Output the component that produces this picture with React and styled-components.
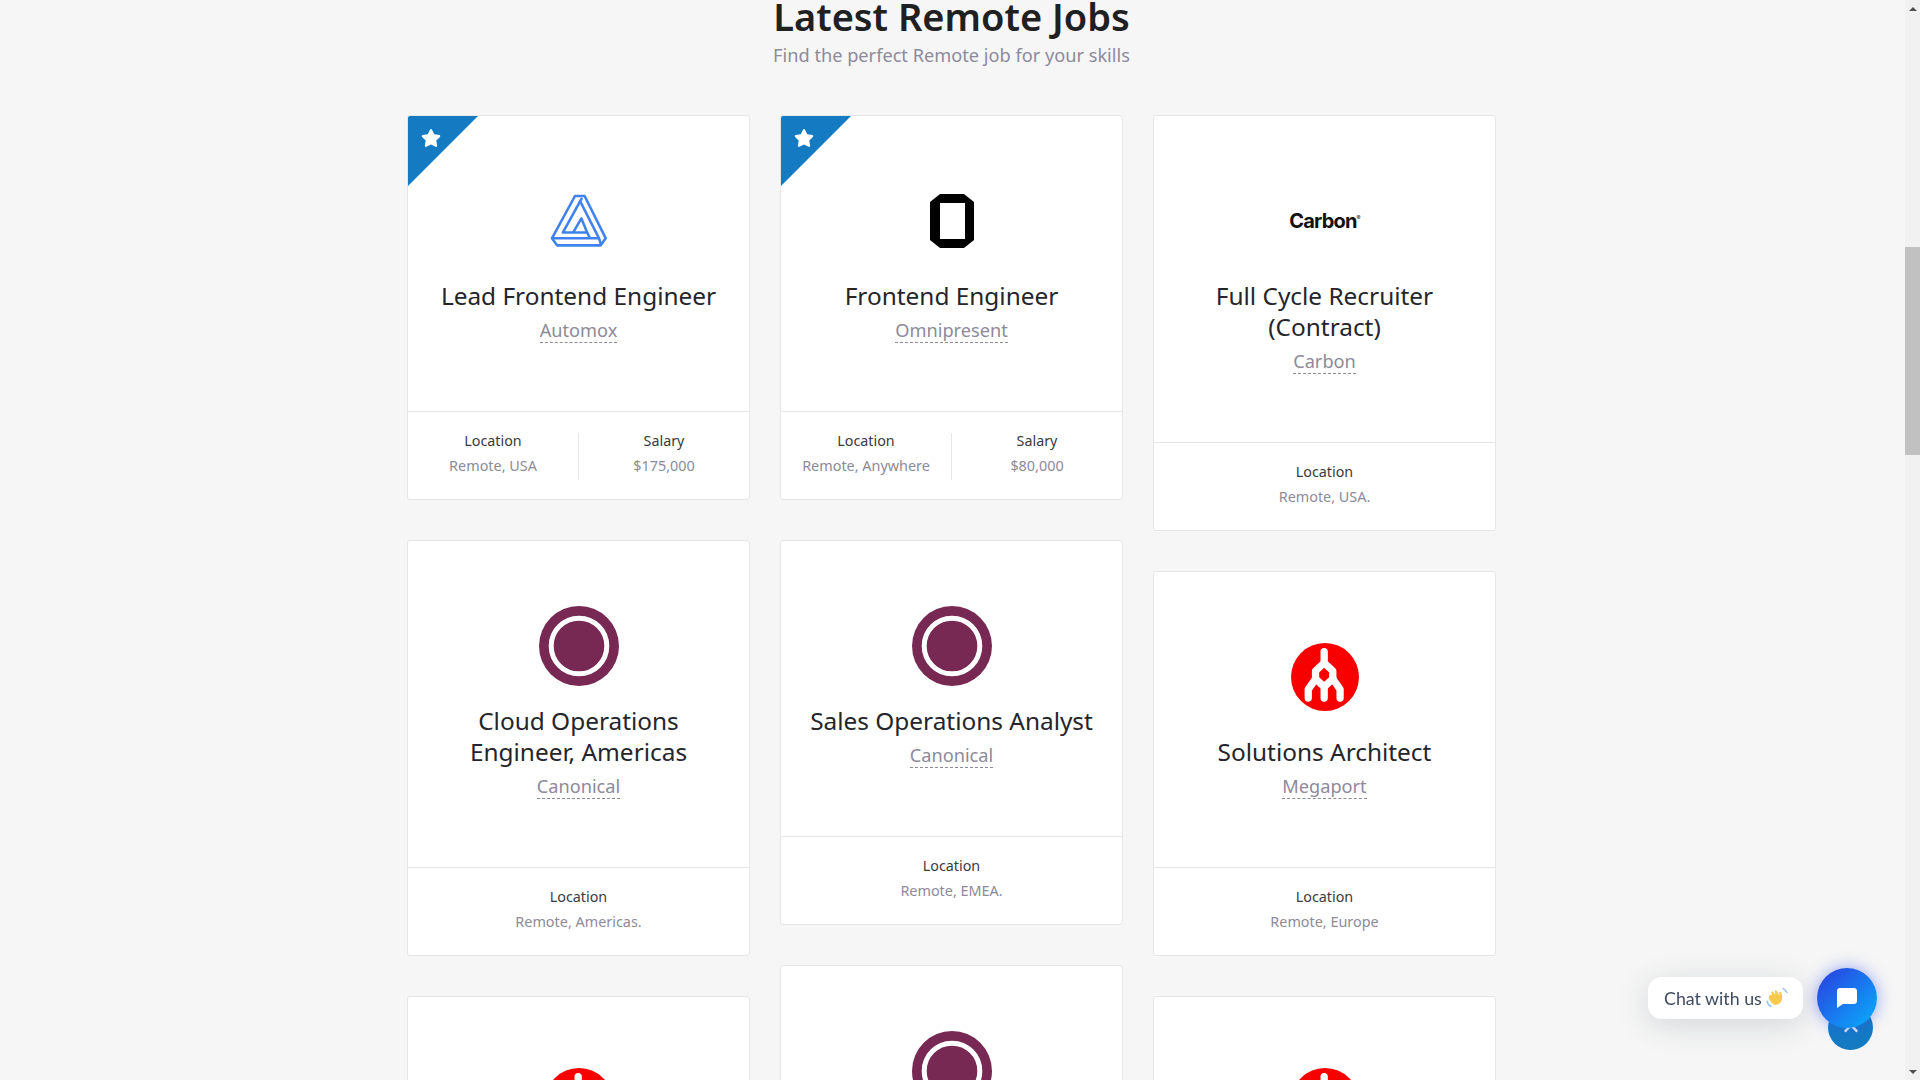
import React from "react";
import styled, { createGlobalStyle } from "styled-components";
import { FaStar, FaChevronUp } from "react-icons/fa";

const GlobalStyle = createGlobalStyle`
  html, body {
    margin: 0;
    height: 100%;
    overflow: hidden;
    background: #f6f6f6;
  }
  * {
    box-sizing: border-box;
  }
`;

function AutomoxLogo() {
  return (
    <svg width="58" height="54" viewBox="52 40 181 168" fill="none" stroke="#3f82f0" strokeWidth="8" strokeLinejoin="round">
      <path d="M130 46H160L226 178L210 200H74L58 178Z" />
      <path d="M58 178H205L212 200" />
      <path d="M205 178L145 60" />
      <path d="M152 52L92 160H168L150 116L124 160" />
      <path d="M168 160L177 178" />
    </svg>
  );
}

function OmnipresentLogo() {
  return (
    <svg width="44" height="54" viewBox="0 0 44 54">
      <path
        fillRule="evenodd"
        fill="#000"
        d="M10 0H34L44 8V46L34 54H10L0 46V8ZM10 9V45H35V9Z"
      />
    </svg>
  );
}

function CarbonLogo() {
  return (
    <CarbonMark>
      Carbon<sup>®</sup>
    </CarbonMark>
  );
}

function CanonicalLogo() {
  return (
    <svg width="80" height="80" viewBox="0 0 80 80">
      <circle cx="40" cy="40" r="40" fill="#772953" />
      <circle cx="40" cy="40" r="27.8" fill="none" stroke="#fff" strokeWidth="5" />
    </svg>
  );
}

function MegaportLogo() {
  return (
    <svg width="68" height="68" viewBox="60 68 205 205">
      <circle cx="162.5" cy="170.5" r="102.5" fill="#f80000" />
      <g fill="none" stroke="#fff" strokeWidth="22" strokeLinecap="round" strokeLinejoin="round">
        <path d="M160 94V128" />
        <path d="M160 128L134 152V176L160 200L186 176V152Z" />
        <path d="M134 176L112 208V234" />
        <path d="M186 176L208 208V234" />
        <path d="M160 200V234" />
      </g>
    </svg>
  );
}

function WaveEmoji() {
  return (
    <svg width="22" height="22" viewBox="0 0 20 20">
      <path d="M1 13c.4 2 1.6 3.6 3.4 4.7" fill="none" stroke="#8cc6ee" strokeWidth="1.4" strokeLinecap="round" />
      <path d="M15.5 1.5c1.5.6 2.8 1.8 3.5 3.5" fill="none" stroke="#8cc6ee" strokeWidth="1.4" strokeLinecap="round" />
      <path
        fill="#fbc94b"
        d="M3.6 7.5c.8-.7 1.7-.3 2.2.4l-.9-2.5c-.4-1 .9-1.8 1.7-.8l2 2.6-.6-3.1c-.2-1.1 1.3-1.5 1.8-.4l2.4 4.3-.2-2.7c-.1-1.2 1.5-1.4 1.9-.3.9 2.4 1.3 5.3.1 7.8-1.4 3-5 4.4-7.7 2.6-2.1-1.4-3.2-4-3.9-6.2-.2-.6.6-.9 1.2-1.7z"
      />
    </svg>
  );
}

function ChatBubble() {
  return (
    <svg width="20" height="20" viewBox="0 0 20 20">
      <path fill="#fff" d="M3 0H17C18.7 0 20 1.3 20 3V13C20 14.7 18.7 16 17 16H6L0 20V3C0 1.3 1.3 0 3 0Z" />
    </svg>
  );
}

const logos = {
  automox: AutomoxLogo,
  omnipresent: OmnipresentLogo,
  carbon: CarbonLogo,
  canonical: CanonicalLogo,
  megaport: MegaportLogo,
};

// the last card of each column runs past the fold, only its logo shows
const columns = [
  [
    { logo: "automox", title: "Lead Frontend Engineer", company: "Automox", location: "Remote, USA", salary: "$175,000", featured: true },
    { logo: "canonical", title: "Cloud Operations Engineer, Americas", company: "Canonical", location: "Remote, Americas." },
    { logo: "megaport" },
  ],
  [
    { logo: "omnipresent", title: "Frontend Engineer", company: "Omnipresent", location: "Remote, Anywhere", salary: "$80,000", featured: true },
    { logo: "canonical", title: "Sales Operations Analyst", company: "Canonical", location: "Remote, EMEA." },
    { logo: "canonical" },
  ],
  [
    { logo: "carbon", title: "Full Cycle Recruiter (Contract)", company: "Carbon", location: "Remote, USA." },
    { logo: "megaport", title: "Solutions Architect", company: "Megaport", location: "Remote, Europe" },
    { logo: "megaport" },
  ],
];

function JobCard({ job }) {
  const Logo = logos[job.logo];
  return (
    <Card>
      {job.featured && (
        <Ribbon>
          <FaStar />
        </Ribbon>
      )}
      <CardBody>
        <LogoSlot>
          <Logo />
        </LogoSlot>
        {job.title && <JobTitle>{job.title}</JobTitle>}
        {job.company && (
          <CompanyRow>
            <Company>{job.company}</Company>
          </CompanyRow>
        )}
      </CardBody>
      {job.location && (
        <CardFooter>
          <FooterCell>
            <FooterLabel>Location</FooterLabel>
            <FooterValue>{job.location}</FooterValue>
          </FooterCell>
          {job.salary && (
            <FooterCell $divided>
              <FooterLabel>Salary</FooterLabel>
              <FooterValue>{job.salary}</FooterValue>
            </FooterCell>
          )}
        </CardFooter>
      )}
    </Card>
  );
}

export default function App() {
  return (
    <Page>
      <GlobalStyle />
      <Main>
        <Heading>Latest Remote Jobs</Heading>
        <SubHeading>Find the perfect Remote job for your skills</SubHeading>
        <Columns>
          {columns.map((jobs, i) => (
            <Column key={i}>
              {jobs.map((job, j) => (
                <JobCard key={j} job={job} />
              ))}
            </Column>
          ))}
        </Columns>
      </Main>
      <Scrollbar>
        <ArrowButton>
          <ArrowUp />
        </ArrowButton>
        <Track>
          <Thumb />
        </Track>
        <ArrowButton>
          <ArrowDown />
        </ArrowButton>
      </Scrollbar>
      <BackToTop>
        <FaChevronUp />
      </BackToTop>
      <ChatWidget>
        <ChatPill>
          Chat with us <WaveEmoji />
        </ChatPill>
        <ChatButton>
          <ChatBubble />
        </ChatButton>
      </ChatWidget>
    </Page>
  );
}

const Page = styled.div`
  display: flex;
  height: 100vh;
  overflow: hidden;
  font-family: "Noto Sans", "Open Sans", sans-serif;
  background: #f6f6f6;
`;

const Main = styled.main`
  flex: 1;
  min-width: 0;
  padding-right: 2px;
  overflow: hidden;
`;

const Heading = styled.h2`
  margin: 0;
  text-align: center;
  font-size: 38px;
  line-height: 33px;
  font-weight: 600;
  color: #1e2022;
`;

const SubHeading = styled.p`
  margin: 9px 0 0;
  text-align: center;
  font-size: 18.2px;
  line-height: 27px;
  color: #8d8a9a;
`;

const Columns = styled.div`
  display: grid;
  grid-template-columns: repeat(3, 1fr);
  gap: 30px;
  width: 1089px;
  margin: 46px auto 0;
  align-items: start;
`;

const Column = styled.div`
  display: flex;
  flex-direction: column;
  gap: 40px;
`;

const Card = styled.article`
  position: relative;
  overflow: hidden;
  background: #fff;
  border: 1px solid #e6e6e6;
  border-radius: 3px;
`;

const Ribbon = styled.div`
  position: absolute;
  top: 0;
  left: 0;
  width: 70px;
  height: 70px;
  padding: 12px 0 0 13px;
  background: #147bc3;
  clip-path: polygon(0 0, 100% 0, 0 100%);
  color: #fff;
  font-size: 20px;
  line-height: 1;
`;

const CardBody = styled.div`
  padding: 65px 20px 66px;
  text-align: center;
`;

const LogoSlot = styled.div`
  display: flex;
  align-items: center;
  justify-content: center;
  height: 80px;
`;

const CarbonMark = styled.span`
  font-family: "Inter", "Liberation Sans", sans-serif;
  font-size: 20px;
  font-weight: 700;
  letter-spacing: -0.8px;
  color: #111;

  sup {
    font-size: 6px;
    font-weight: 400;
  }
`;

const JobTitle = styled.h3`
  margin: 19px 0 0;
  font-size: 24.4px;
  line-height: 31px;
  font-weight: 400;
  color: #25252b;
`;

const CompanyRow = styled.div`
  margin-top: 7px;
  height: 27px;
`;

const Company = styled.span`
  display: inline-block;
  font-size: 18.2px;
  line-height: 24px;
  color: #8d8a9a;
  border-bottom: 1px dashed #8d8a9a;
`;

const CardFooter = styled.div`
  display: flex;
  height: 88px;
  padding-top: 21px;
  border-top: 1px solid #e6e6e6;
`;

const FooterCell = styled.div`
  flex: 1;
  height: 47px;
  text-align: center;
  border-left: ${(p) => (p.$divided ? "1px solid #e6e6e6" : "none")};
`;

const FooterLabel = styled.div`
  font-size: 14.3px;
  line-height: 16px;
  color: #3a3a40;
`;

const FooterValue = styled.div`
  margin-top: 8px;
  font-size: 14.4px;
  line-height: 18px;
  color: #8d8a9a;
`;

const Scrollbar = styled.aside`
  display: flex;
  flex-direction: column;
  flex: 0 0 15px;
  background: #f1f1f1;
`;

const ArrowButton = styled.div`
  display: flex;
  align-items: center;
  justify-content: center;
  height: 17px;
  flex: none;
`;

const ArrowUp = styled.span`
  border: 4px solid transparent;
  border-top: 0;
  border-bottom: 4px solid #505050;
`;

const ArrowDown = styled.span`
  border: 4px solid transparent;
  border-bottom: 0;
  border-top: 4px solid #505050;
`;

const Track = styled.div`
  flex: 1;
  padding-top: 230px;
`;

const Thumb = styled.div`
  height: 208px;
  background: #c1c1c1;
`;

const BackToTop = styled.div`
  position: fixed;
  left: 1828px;
  top: 1005px;
  display: flex;
  align-items: center;
  justify-content: center;
  width: 45px;
  height: 45px;
  border-radius: 50%;
  background: #147bc3;
  color: #e8f2fa;
  font-size: 16px;
`;

const ChatWidget = styled.div`
  position: fixed;
  left: 1648px;
  top: 968px;
  display: flex;
  align-items: center;
  gap: 14px;
`;

const ChatPill = styled.div`
  display: flex;
  align-items: center;
  gap: 4px;
  width: 155px;
  height: 42px;
  padding-left: 16px;
  border-radius: 14px;
  background: #fff;
  box-shadow: 0 6px 32px rgba(40, 50, 70, 0.16);
  font-family: "Lato", "Noto Sans", sans-serif;
  font-size: 17.8px;
  white-space: nowrap;
  color: #3e4a5e;
`;

const ChatButton = styled.div`
  display: flex;
  align-items: center;
  justify-content: center;
  width: 60px;
  height: 60px;
  border-radius: 50%;
  background: linear-gradient(135deg, #2a3ce0, #08b0fb);
  box-shadow: 0 0 16px rgba(50, 80, 240, 0.5);
`;
